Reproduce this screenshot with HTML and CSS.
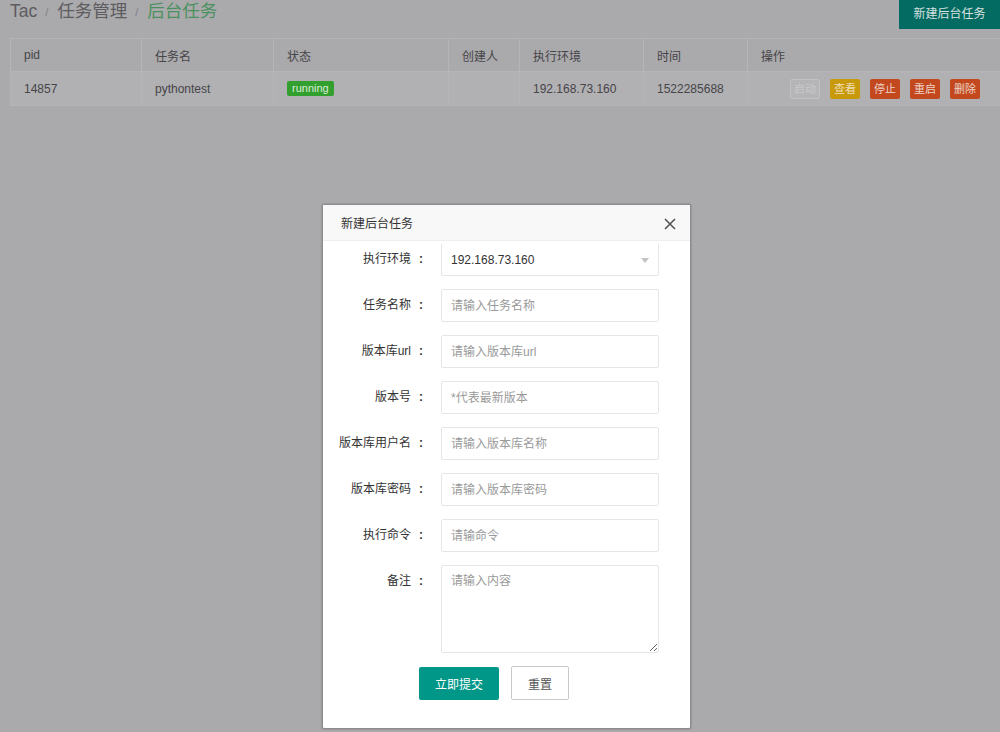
FILE: index.html
```html
<!DOCTYPE html>
<html lang="zh-CN">
<head>
<meta charset="utf-8">
<title>后台任务</title>
<link rel="stylesheet" href="styles.css">
</head>
<body>
<div class="page">
  <div class="topbar">
    <div class="breadcrumb">
      <span class="crumb">Tac</span><span class="sep">/</span><span class="crumb">任务管理</span><span class="sep">/</span><span class="crumb current">后台任务</span>
    </div>
    <a class="btn-new">新建后台任务</a>
  </div>
  <table class="task-table">
    <colgroup>
      <col class="c1"><col class="c2"><col class="c3"><col class="c4"><col class="c5"><col class="c6"><col class="c7">
    </colgroup>
    <thead>
      <tr><th>pid</th><th>任务名</th><th>状态</th><th>创建人</th><th>执行环境</th><th>时间</th><th>操作</th></tr>
    </thead>
    <tbody>
      <tr>
        <td>14857</td>
        <td>pythontest</td>
        <td><span class="badge">running</span></td>
        <td></td>
        <td>192.168.73.160</td>
        <td>1522285688</td>
        <td class="ops">
          <span class="xs disabled">启动</span><span class="xs warm">查看</span><span class="xs danger">停止</span><span class="xs danger">重启</span><span class="xs danger">删除</span>
        </td>
      </tr>
    </tbody>
  </table>
</div>

<div class="modal">
  <div class="modal-head">
    <span class="modal-title">新建后台任务</span>
    <svg class="close" width="12" height="12" viewBox="0 0 12 12"><path d="M1 1 L11 11 M11 1 L1 11" stroke="#555" stroke-width="1.6" fill="none"/></svg>
  </div>
  <div class="modal-body">
    <div class="row first">
      <label class="lbl">执行环境<span class="colon">:</span></label>
      <div class="select"><span>192.168.73.160</span><i class="tri"></i></div>
    </div>
    <div class="row">
      <label class="lbl">任务名称<span class="colon">:</span></label>
      <input class="inp" placeholder="请输入任务名称">
    </div>
    <div class="row">
      <label class="lbl">版本库url<span class="colon">:</span></label>
      <input class="inp" placeholder="请输入版本库url">
    </div>
    <div class="row">
      <label class="lbl">版本号<span class="colon">:</span></label>
      <input class="inp" placeholder="*代表最新版本">
    </div>
    <div class="row">
      <label class="lbl">版本库用户名<span class="colon">:</span></label>
      <input class="inp" placeholder="请输入版本库名称">
    </div>
    <div class="row">
      <label class="lbl">版本库密码<span class="colon">:</span></label>
      <input class="inp" placeholder="请输入版本库密码">
    </div>
    <div class="row">
      <label class="lbl">执行命令<span class="colon">:</span></label>
      <input class="inp" placeholder="请输命令">
    </div>
    <div class="row">
      <label class="lbl">备注<span class="colon">:</span></label>
      <textarea class="txt" placeholder="请输入内容"></textarea>
    </div>
    <div class="actions">
      <button class="btn primary">立即提交</button>
      <button class="btn plain">重置</button>
    </div>
  </div>
</div>
</body>
</html>
```
FILE: styles.css
```css
html, body {
  margin: 0;
  padding: 0;
}
body {
  width: 1000px;
  height: 732px;
  overflow: hidden;
  background: #aaa9ac;
  font-family: "Liberation Sans", "Noto Sans CJK SC", sans-serif;
  color: #333;
  position: relative;
}
.page {
  padding-left: 10px;
}
.topbar {
  display: flex;
  justify-content: space-between;
  align-items: flex-start;
  height: 29px;
}
.breadcrumb {
  font-size: 17.5px;
  line-height: 20px;
  color: #5d5c60;
  display: flex;
  align-items: center;
}
.breadcrumb .sep {
  font-size: 11px;
  color: #807f83;
  margin: 2px 9px 0 8px;
}
.breadcrumb .current {
  color: #4b9160;
}
.btn-new {
  display: block;
  width: 101px;
  height: 29px;
  line-height: 29px;
  text-align: center;
  background: #036b61;
  color: #d8e2e0;
  font-size: 12px;
}
.task-table {
  margin-top: 9px;
  width: 1012px;
  border-collapse: collapse;
  table-layout: fixed;
  font-size: 12px;
  color: #464548;
}
.c1 { width: 131px; }
.c2 { width: 132px; }
.c3 { width: 175px; }
.c4 { width: 71px; }
.c5 { width: 124px; }
.c6 { width: 104px; }
.c7 { width: 275px; }
.task-table th,
.task-table td {
  border: 1px solid #b5b4b7;
  padding: 0 13px;
  text-align: left;
  font-weight: normal;
  white-space: nowrap;
}
.task-table th {
  height: 32px;
  background: #aaa9ac;
}
.task-table td {
  height: 33px;
  background: #b1b0b3;
}
.badge {
  display: inline-block;
  height: 15px;
  line-height: 15px;
  padding: 0 5px;
  font-size: 11px;
  background: #32a02e;
  color: #dcebd9;
  border-radius: 2px;
}
.task-table td.ops {
  text-align: center;
  padding: 0;
  font-size: 0;
}
.xs {
  display: inline-block;
  box-sizing: border-box;
  width: 30px;
  height: 20px;
  line-height: 20px;
  font-size: 11px;
  text-align: center;
  border-radius: 2px;
  margin-left: 10px;
  vertical-align: middle;
}
.xs:first-child {
  margin-left: 0;
}
.xs.disabled {
  background: #b5b4b7;
  border: 1px solid #c1c0c3;
  color: #c9c8cb;
  line-height: 18px;
}
.xs.warm {
  background: #c8990a;
  color: #eedfb8;
}
.xs.danger {
  background: #c4481e;
  color: #ecd2c8;
}

/* modal */
.modal {
  position: absolute;
  left: 322px;
  top: 204px;
  width: 369px;
  height: 525px;
  box-sizing: border-box;
  background: #fff;
  border: 1px solid #8c8b8e;
  box-shadow: 0 0 2px rgba(0, 0, 0, 0.35);
  border-radius: 2px;
  overflow: hidden;
}
.modal-head {
  height: 36px;
  box-sizing: border-box;
  border-bottom: 1px solid #eee;
  background: #f8f8f8;
  display: flex;
  align-items: center;
  justify-content: space-between;
  padding: 0 14px 0 18px;
}
.modal-title {
  font-size: 12px;
  color: #333;
}
.close {
  display: block;
  margin-top: 3px;
}
.modal-body {
  padding: 0;
}
.row {
  display: flex;
  align-items: flex-start;
  margin-bottom: 13px;
}
.row.first {
  margin-top: 2px;
}
.lbl {
  flex: none;
  width: 104px;
  margin-right: 14px;
  text-align: right;
  font-size: 12px;
  line-height: 33px;
  color: #333;
  white-space: nowrap;
}
.colon {
  display: inline-block;
  width: 12px;
  margin-left: 4px;
  text-align: center;
  font-weight: bold;
}
.inp,
.select,
.txt {
  flex: none;
  width: 218px;
  height: 33px;
  box-sizing: border-box;
  border: 1px solid #e6e6e6;
  border-radius: 2px;
  background: #fff;
  font-family: "Liberation Sans", "Noto Sans CJK SC", sans-serif;
  font-size: 12px;
  color: #333;
  padding: 0 9px;
  margin: 0;
  outline: none;
}
.inp::placeholder,
.txt::placeholder {
  color: #9a9a9a;
}
.select {
  display: flex;
  align-items: center;
  justify-content: space-between;
  border-top-color: transparent;
  padding-right: 9px;
}
.tri {
  display: block;
  width: 0;
  height: 0;
  border-left: 4px solid transparent;
  border-right: 4px solid transparent;
  border-top: 5px solid #c2c2c2;
  margin-top: 2px;
}
.txt {
  height: 88px;
  padding-top: 6px;
  line-height: 18px;
  resize: vertical;
  display: block;
}
.actions {
  display: flex;
  align-items: center;
  gap: 12px;
  padding-left: 96px;
  margin-top: 0;
}
.btn {
  height: 34px;
  box-sizing: border-box;
  font-family: "Liberation Sans", "Noto Sans CJK SC", sans-serif;
  font-size: 12px;
  border-radius: 2px;
  cursor: pointer;
  padding: 0;
}
.btn.primary {
  width: 80px;
  background: #009688;
  color: #fff;
  border: none;
  height: 33px;
  margin-top: 1px;
}
.btn.plain {
  width: 58px;
  background: #fff;
  color: #555;
  border: 1px solid #c9c9c9;
}
```
